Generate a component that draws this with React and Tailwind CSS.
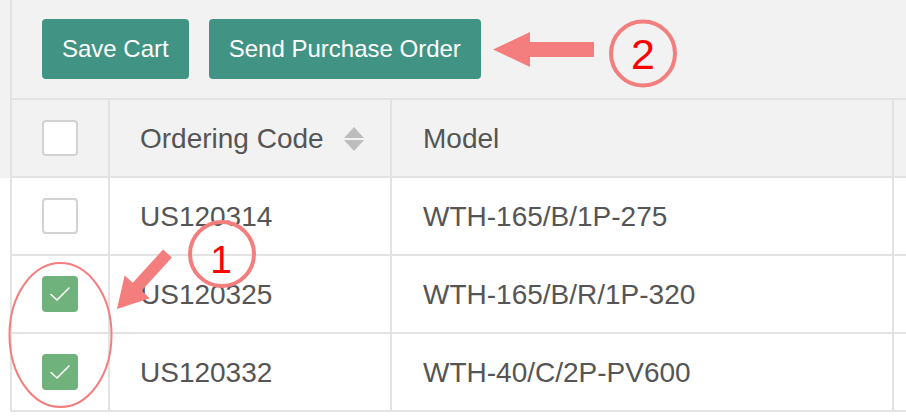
import React from 'react';

const rows = [
  { code: 'US120314', model: 'WTH-165/B/1P-275', checked: false },
  { code: 'US120325', model: 'WTH-165/B/R/1P-320', checked: true },
  { code: 'US120332', model: 'WTH-40/C/2P-PV600', checked: true },
];

const Checkbox = ({ checked }) =>
  checked ? (
    <div className="w-9 h-9 rounded-[4px] bg-[#6fb27b] flex items-center justify-center">
      <svg width="36" height="36" viewBox="0 0 36 36" fill="none">
        <polyline points="9,18.5 15,24 27,12" stroke="#fff" strokeWidth="1.6" strokeLinecap="round" strokeLinejoin="round" />
      </svg>
    </div>
  ) : (
    <div className="w-9 h-9 rounded-[4px] bg-white border-2 border-[#d2d2d2]" />
  );

const SortIcon = () => (
  <svg width="20" height="24" viewBox="0 0 20 24" className="ml-5">
    <polygon points="10,0 20,11 0,11" fill="#bdbdbd" />
    <polygon points="0,13 20,13 10,24" fill="#bdbdbd" />
  </svg>
);

const Row = ({ bg, children }) => (
  <div className={`flex h-[78px] ${bg} text-[28px] text-[#555]`}>
    <div className="w-[10px] shrink-0" />
    <div className="flex flex-1 border-b-2 border-[#e3e3e3]">{children}</div>
  </div>
);

const Annotations = () => (
  <svg className="absolute inset-0 pointer-events-none" width="906" height="417" viewBox="0 0 906 417">
    <polygon points="493,49.5 530,32 530,42 594,42 594,57 530,57 530,67" fill="#f47d7d" />
    <circle cx="643" cy="53.5" r="32" fill="none" stroke="#f47d7d" strokeWidth="4" />
    <text x="643" y="69" textAnchor="middle" fontSize="43" fill="#ff0000" fontFamily="'Liberation Sans', Arial, sans-serif">2</text>
    <circle cx="222" cy="254" r="32" fill="none" stroke="#f47d7d" strokeWidth="4" />
    <text x="221" y="273" textAnchor="middle" fontSize="39" fill="#ff0000" fontFamily="'Liberation Sans', Arial, sans-serif">1</text>
    <polygon points="117,309 124.6,275.4 132.8,282.8 163.1,249.5 171.9,257.5 141.6,290.8 149.8,298.2" fill="#f47d7d" />
    <ellipse cx="60.5" cy="335" rx="51" ry="72" fill="none" stroke="#f47d7d" strokeWidth="2" />
  </svg>
);

export default function App() {
  return (
    <div className="relative w-[906px] h-[417px] overflow-hidden bg-white font-['Liberation_Sans',Arial,sans-serif]">
      <div className="flex h-[100px] bg-[#f2f2f2]">
        <div className="w-[10px] shrink-0" />
        <div className="flex-1 flex items-start gap-5 pl-[30px] pt-[19px] border-l-2 border-b-2 border-[#e3e3e3]">
          <button className="h-[60px] px-5 rounded-[4px] bg-[#419384] text-white text-[24px]">Save Cart</button>
          <button className="h-[60px] px-5 rounded-[4px] bg-[#419384] text-white text-[24px]">Send Purchase Order</button>
        </div>
      </div>

      <Row bg="bg-[#f2f2f2]">
        <div className="w-[100px] shrink-0 border-x-2 border-[#e3e3e3] flex items-center justify-center">
          <Checkbox checked={false} />
        </div>
        <div className="w-[282px] shrink-0 border-r-2 border-[#e3e3e3] flex items-center pl-[30px] pt-[2px]">
          <span>Ordering Code</span>
          <SortIcon />
        </div>
        <div className="w-[502px] shrink-0 border-r-2 border-[#e3e3e3] flex items-center pl-[31px] pt-[2px]">Model</div>
        <div className="flex-1" />
      </Row>

      {rows.map((r) => (
        <Row key={r.code} bg="bg-white">
          <div className="w-[100px] shrink-0 border-x-2 border-[#e3e3e3] flex items-center justify-center">
            <Checkbox checked={r.checked} />
          </div>
          <div className="w-[282px] shrink-0 border-r-2 border-[#e3e3e3] flex items-center pl-[30px] pt-[2px]">{r.code}</div>
          <div className="w-[502px] shrink-0 border-r-2 border-[#e3e3e3] flex items-center pl-[31px] pt-[2px]">{r.model}</div>
          <div className="flex-1" />
        </Row>
      ))}

      <Annotations />
    </div>
  );
}
